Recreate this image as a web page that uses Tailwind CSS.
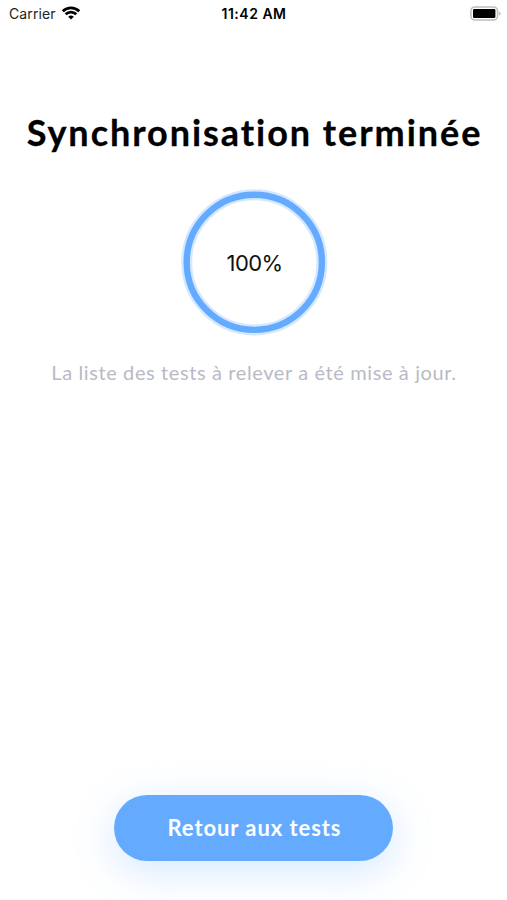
<!DOCTYPE html>
<html lang="fr">
<head>
<meta charset="utf-8">
<title>Synchronisation</title>
<script src="https://cdn.jsdelivr.net/npm/@tailwindcss/browser@4"></script>
</head>
<body class="bg-white">
<div class="flex h-[900px] w-[507px] flex-col items-center overflow-hidden bg-white font-['Lato',sans-serif]">
  <header class="grid h-7 w-full grid-cols-3 items-center pl-[9px] pr-[6px] font-['Inter',sans-serif] text-[14px] leading-7 text-[#222]">
    <div class="flex items-center gap-[6px]">
      <span class="tracking-[0.1px]">Carrier</span>
      <svg class="-mt-[2px] h-[14px] w-[18px]" viewBox="0 0 18 14" fill="none" stroke="#000" stroke-width="2.8">
        <path d="M.8 5.2a11.7 11.7 0 0 1 16.4 0M3.7 8.3a7.6 7.6 0 0 1 10.6 0"/>
        <path d="M9 13.6 6.2 10.8a4.1 4.1 0 0 1 5.6 0z" fill="#000" stroke="none"/>
      </svg>
    </div>
    <div class="-ml-[2px] text-center font-semibold tracking-[0.5px] whitespace-nowrap text-black">11:42 AM</div>
    <svg class="-mt-[2px] h-[15px] w-[31px] justify-self-end" viewBox="0 0 31 15">
      <rect x=".9" y=".9" width="26.6" height="13.2" rx="4" fill="#fff" stroke="#bdbdbd" stroke-width="1.5"/>
      <rect x="3" y="3" width="22.4" height="9" rx="1.3" fill="#000"/>
      <path d="M28.9 5.2q1.7.7 1.7 2.3t-1.7 2.3z" fill="#bdbdbd"/>
    </svg>
  </header>
  <h1 class="mt-[80px] pl-[2px] text-[36px] leading-[48px] font-bold tracking-[1.95px] whitespace-nowrap text-black [-webkit-text-stroke:0.3px_#000]">Synchronisation terminée</h1>
  <div class="mt-[32px] grid h-[150px] w-[150px] place-items-center">
    <svg class="col-start-1 row-start-1 h-[150px] w-[150px]" viewBox="0 0 150 150" fill="none">
      <circle cx="75.3" cy="74.3" r="67.6" stroke="#d4e8ff" stroke-width="11"/>
      <circle cx="75.3" cy="74.3" r="67.6" stroke="#64abff" stroke-width="6.4"/>
    </svg>
    <span class="col-start-1 row-start-1 pl-[2px] font-['Inter',sans-serif] text-[22px] leading-7 tracking-[-0.6px] text-[#111]">100%</span>
  </div>
  <p class="mt-[20px] pl-[1px] text-[20px] leading-[28px] tracking-[0.61px] whitespace-nowrap text-[#b9bac6]">La liste des tests à relever a été mise à jour.</p>
  <button class="mt-auto mb-[39px] h-[66px] w-[279px] rounded-full bg-[#64abff] pl-[2px] text-[22px] leading-[66px] font-bold tracking-[0.93px] text-white shadow-[0_10px_40px_rgba(100,171,255,0.28)]">Retour aux tests</button>
</div>
</body>
</html>
